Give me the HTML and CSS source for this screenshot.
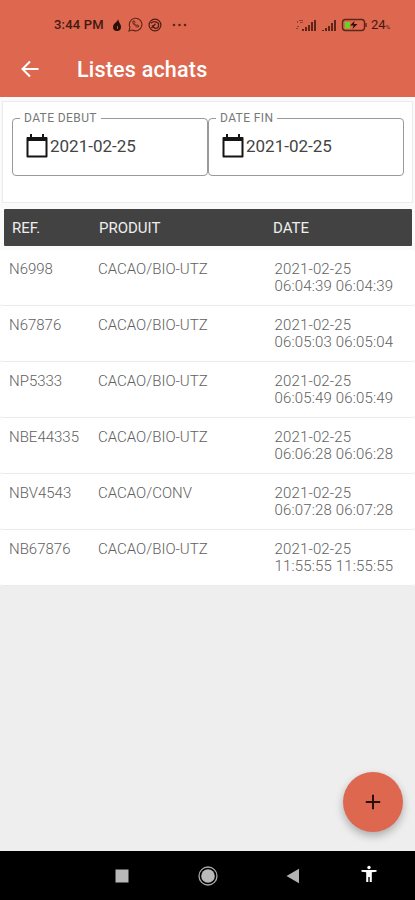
FILE: index.html
```html
<!DOCTYPE html>
<html lang="fr">
<head>
	<meta charset="UTF-8">
	<title>Listes achats</title>
	<link rel="stylesheet" href="styles.css">
</head>
<body>
	<header class="header">
		<div class="status">
			<span class="time">3:44 PM</span>
			<svg class="drop" width="10" height="14" viewBox="0 0 10 14">
				<path d="M6 1C6 4 1 5 1 9a4 4 0 0 0 8 0C9 6 7 5 6 1z" fill="#2b1009"/>
				<path d="M5.500 8v3" stroke="#b55440" stroke-width="1"/>
			</svg>
			<svg class="whatsapp" width="15" height="15" viewBox="0 0 15 15" fill="none" stroke="#5e2519">
				<path d="M1 14l1-3.6A6.3 6.3 0 1 1 4.5 13z" stroke-width="1.1"/>
				<path d="M4.8 4.4c-.8 1.8 3.4 6.2 5.4 5.6l.5-1.2-1.6-1-1 .7-1.8-2 .7-1-.8-1.6z" stroke-width="1"/>
			</svg>
			<svg class="swirl" width="14" height="14" viewBox="0 0 14 14" fill="none" stroke="#4d1d13">
				<circle cx="7" cy="7" r="5.9" stroke-width="1.2"/>
				<path d="M3 5.3c2-2 5-2 7.4 0M10.5 5v4.500M3.500 10l4-4.200M7 10.500c2 0 3-.6 3.500-2M4 7.500l3 3" stroke-width="1.3"/>
			</svg>
			<svg class="more" width="15" height="4" viewBox="0 0 15 4" fill="#5e2519">
				<circle cx="2" cy="2" r="1.3"/>
				<circle cx="7.5" cy="2" r="1.3"/>
				<circle cx="13" cy="2" r="1.3"/>
			</svg>
			<svg class="signal" width="22" height="14" viewBox="0 0 22 14" fill="#5e2519">
				<path d="M2 3h1v2H2zM4 2h4v1H4zM5 4h3v1H5zM2 8h2v1H2zM1 10h2v1H1z" opacity=".6"/>
				<path d="M7 11h2v2H7zM10 9h2v4h-2zM13 7h2v6h-2zM16 4h2v9h-2zM19 2h2v11h-2z"/>
			</svg>
			<svg class="signal2" width="17" height="14" viewBox="0 0 17 14" fill="#5e2519">
				<path d="M1 12h2v1H1zM4 10h2v3H4zM7 8h2v5H7zM10 5h2v8h-2zM13 2h2v11h-2z"/>
			</svg>
			<svg class="battery" width="27" height="14" viewBox="0 0 27 14">
				<rect x="1.5" y="1.5" width="22" height="11" rx="3" fill="none" stroke="#5e2519" stroke-width="1.4"/>
				<path d="M4 4h5v6.500H4z" fill="#65d524"/>
				<path d="M25 5v4" stroke="#5e2519" stroke-width="1.4"/>
				<path d="M13.500 3L9 7.500h3.500L11.500 11l5-5h-3.500z" fill="#2b1009"/>
			</svg>
			<span class="percent">24<small>%</small></span>
		</div>
		<div class="toolbar">
			<svg class="back" width="20" height="18" viewBox="0 0 20 18" fill="none" stroke="#fff" stroke-width="2">
				<path d="M18.500 9H2.500M10 1.500L2.500 9l7.500 7.500"/>
			</svg>
			<h1>Listes achats</h1>
		</div>
	</header>

	<div class="filters">
		<fieldset>
			<legend>DATE DEBUT</legend>
			<svg width="24" height="26" viewBox="0 0 24 26">
				<path d="M2.500 5h19v18.500h-19z" fill="none" stroke="#151515" stroke-width="2" stroke-linejoin="round"/>
				<path d="M2 4h20v4H2zM5 1h2v4H5zM17 1h2v4h-2z" fill="#151515"/>
			</svg>
			<span>2021-02-25</span>
		</fieldset>
		<fieldset>
			<legend>DATE FIN</legend>
			<svg width="24" height="26" viewBox="0 0 24 26">
				<path d="M2.500 5h19v18.500h-19z" fill="none" stroke="#151515" stroke-width="2" stroke-linejoin="round"/>
				<path d="M2 4h20v4H2zM5 1h2v4H5zM17 1h2v4h-2z" fill="#151515"/>
			</svg>
			<span>2021-02-25</span>
		</fieldset>
	</div>

	<div class="list">
		<div class="row head">
			<span>REF.</span><span>PRODUIT</span><span>DATE</span>
		</div>
		<div class="row">
			<span>N6998</span><span>CACAO/BIO-UTZ</span><span class="date">2021-02-25<br>06:04:39 06:04:39</span>
		</div>
		<div class="row">
			<span>N67876</span><span>CACAO/BIO-UTZ</span><span class="date">2021-02-25<br>06:05:03 06:05:04</span>
		</div>
		<div class="row">
			<span>NP5333</span><span>CACAO/BIO-UTZ</span><span class="date">2021-02-25<br>06:05:49 06:05:49</span>
		</div>
		<div class="row">
			<span>NBE44335</span><span>CACAO/BIO-UTZ</span><span class="date">2021-02-25<br>06:06:28 06:06:28</span>
		</div>
		<div class="row">
			<span>NBV4543</span><span>CACAO/CONV</span><span class="date">2021-02-25<br>06:07:28 06:07:28</span>
		</div>
		<div class="row">
			<span>NB67876</span><span>CACAO/BIO-UTZ</span><span class="date">2021-02-25<br>11:55:55 11:55:55</span>
		</div>
	</div>

	<a href="javascript:;" class="add">
		<svg width="16" height="16" viewBox="0 0 16 16" stroke="#2b1009" stroke-width="2">
			<path d="M8 .8v14.400M.8 8h14.400"/>
		</svg>
	</a>

	<nav class="navbar">
		<svg width="14" height="14" viewBox="0 0 14 14"><path d="M.5.500h13v13H.5z" fill="#b9b9b9"/></svg>
		<svg width="20" height="20" viewBox="0 0 20 20">
			<circle cx="10" cy="10" r="9" fill="none" stroke="#a8a8a8" stroke-width="1.300"/>
			<circle cx="10" cy="10" r="6.800" fill="#b9b9b9"/>
		</svg>
		<svg width="14" height="16" viewBox="0 0 14 16"><path d="M.5 8L13 .8v14.400z" fill="#b3b3b3"/></svg>
		<svg class="person" width="16" height="18" viewBox="0 0 16 18" fill="#fff">
			<circle cx="8" cy="2.500" r="1.700"/>
			<path d="M.5 5h15v1.800l-4.700.5V17H8.700v-5H7.300v5H5.200V7.300L.5 6.800z"/>
		</svg>
	</nav>
</body>
</html>
```
FILE: styles.css
```css
* {
	margin: 0;
	padding: 0;
	box-sizing: border-box;
}
body {
	height: 900px;
	display: flex;
	flex-direction: column;
	position: relative;
	overflow: hidden;
	background: #eee;
	font-family: Roboto, sans-serif;
}
svg {
	display: block;
	flex: none;
}
.header {
	height: 97px;
	flex: none;
	background: #de6750;
}
.status {
	height: 42px;
	padding: 7px 22px 0 54px;
	display: flex;
	align-items: center;
	color: #43190f;
}
.time {
	width: 51px;
	font-size: 13px;
	font-weight: 500;
	letter-spacing: .2px;
	white-space: nowrap;
}
.drop {
	margin-left: 7px;
}
.whatsapp {
	margin-left: 6px;
}
.swirl {
	margin-left: 5px;
}
.more {
	margin-left: 10px;
}
.signal {
	margin-left: auto;
}
.signal2 {
	margin-left: 4px;
}
.battery {
	margin-left: 3px;
}
.percent {
	width: 22px;
	margin-left: 3px;
	font-size: 13px;
	white-space: nowrap;
}
.percent small {
	font-size: 6px;
}
.toolbar {
	height: 55px;
	padding-left: 20px;
	display: flex;
	align-items: center;
}
.back {
	margin-top: -2px;
}
.toolbar h1 {
	margin-left: 37px;
	color: #fff;
	font-size: 21.5px;
	font-weight: 500;
	letter-spacing: .2px;
}
.filters {
	height: 102px;
	flex: none;
	margin: 4px 2px 0;
	padding: 9px 8px 0 9px;
	display: flex;
	background: #fff;
	border: 1px solid #ebebeb;
	box-shadow: 0 0 0 4px #fafafa;
}
.filters fieldset {
	flex: 1;
	height: 65px;
	padding: 8px 0 0 12px;
	display: flex;
	border: 1px solid #999;
	border-radius: 4px;
}
.filters legend {
	padding: 0 4px;
	margin-left: -5px;
	color: #777;
	font-size: 12px;
	line-height: 14px;
	letter-spacing: .4px;
}
.filters span {
	margin-left: 1px;
	color: #444;
	font-size: 17px;
	line-height: 27px;
}
.list {
	padding-top: 6px;
	background: #fafafa;
}
.row {
	height: 56.1px;
	padding: 11px 0 0 9px;
	display: grid;
	grid-template-columns: 89px 176.5px 1fr;
	background: #fff;
	border-bottom: 1px solid #ebebeb;
	border-radius: 3px;
	color: #606060;
	font-size: 15px;
	font-weight: 300;
	line-height: 17.5px;
}
.date {
	letter-spacing: .16px;
}
.head {
	height: 37px;
	margin: 0 3px 3.5px 4px;
	padding: 2px 0 0 8px;
	grid-template-columns: 87px 174px 1fr;
	align-items: center;
	background: #424242;
	border: 0;
	border-radius: 1px;
	color: #eee;
	font-weight: 400;
}
.add {
	position: absolute;
	left: 343px;
	top: 771.5px;
	width: 60px;
	height: 60px;
	display: flex;
	align-items: center;
	justify-content: center;
	background: #de6750;
	border-radius: 50%;
	box-shadow: 0 4px 8px rgba(0, 0, 0, .28);
}
.navbar {
	height: 49px;
	margin-top: auto;
	padding: 0 38px 0 79px;
	display: grid;
	grid-template-columns: 86px 86px 84px 1fr;
	align-items: center;
	justify-items: center;
	background: #000;
}
.navbar .person {
	justify-self: end;
	margin-bottom: 3px;
}
```
